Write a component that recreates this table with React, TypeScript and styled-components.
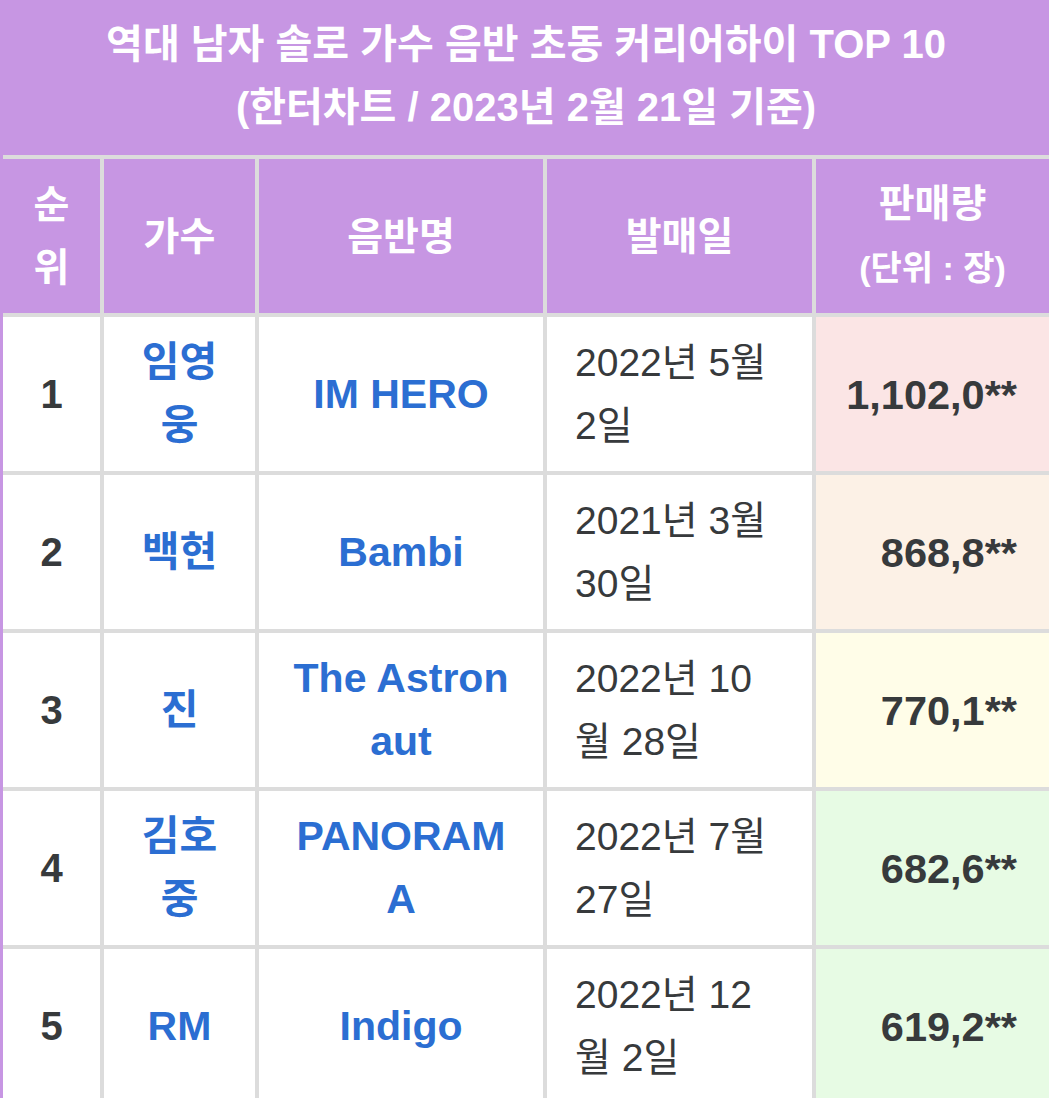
import React from "react";
import styled, { createGlobalStyle } from "styled-components";

interface Entry {
  rank: number;
  artist: string;
  album: string;
  date: string;
  sales: string;
  tint: string;
}

const PURPLE = "#c796e3";
const LINE = "#dcdcdc";
const COLS = "97px 151px 284px 265px 1fr";

const entries: Entry[] = [
  { rank: 1, artist: "임영웅", album: "IM HERO", date: "2022년 5월 2일", sales: "1,102,0**", tint: "#fbe5e5" },
  { rank: 2, artist: "백현", album: "Bambi", date: "2021년 3월 30일", sales: "868,8**", tint: "#fcf1e6" },
  { rank: 3, artist: "진", album: "The Astronaut", date: "2022년 10월 28일", sales: "770,1**", tint: "#fffde8" },
  { rank: 4, artist: "김호중", album: "PANORAMA", date: "2022년 7월 27일", sales: "682,6**", tint: "#e7fbe4" },
  { rank: 5, artist: "RM", album: "Indigo", date: "2022년 12월 2일", sales: "619,2**", tint: "#e7fbe4" },
];

const GlobalStyle = createGlobalStyle`
  html, body {
    margin: 0;
    padding: 0;
    background: #fff;
    overflow: hidden;
  }
  body {
    font-family: "Liberation Sans", "Noto Sans CJK KR", sans-serif;
  }
`;

const Table = styled.div`
  width: 1049px;
  box-sizing: border-box;
  border-left: 3px solid ${PURPLE};
  border-top: 3px solid ${PURPLE};
  background: ${LINE};
  display: flex;
  flex-direction: column;
  gap: 4px;
`;

const Title = styled.div`
  box-sizing: border-box;
  height: 152px;
  background: ${PURPLE};
  color: #fff;
  font-weight: bold;
  font-size: 40px;
  line-height: 63px;
  text-align: center;
  padding: 10px 16px 0;
`;

const Row = styled.div`
  display: grid;
  grid-template-columns: ${COLS};
  gap: 4px;
  height: 154px;
`;

const Cell = styled.div<{ $align?: "left" | "center" | "right"; $bg?: string }>`
  box-sizing: border-box;
  display: flex;
  align-items: center;
  justify-content: ${({ $align }) =>
    $align === "left" ? "flex-start" : $align === "right" ? "flex-end" : "center"};
  text-align: ${({ $align }) => $align || "center"};
  padding: 0 28px;
  background: ${({ $bg }) => $bg || "#fff"};
  line-height: 63px;
  word-break: break-all;
  min-width: 0;
`;

const HeadCell = styled(Cell)`
  background: ${PURPLE};
  color: #fff;
  font-weight: bold;
  font-size: 39px;
`;

const Unit = styled.span`
  font-size: 34px;
`;

const RankCell = styled(Cell)`
  color: #373a3c;
  font-weight: bold;
  font-size: 40px;
`;

const LinkCell = styled(Cell)`
  color: #2b6ed2;
  font-weight: bold;
  font-size: 41px;
`;

const DateCell = styled(Cell)`
  color: #373a3c;
  font-size: 39px;
`;

const SalesCell = styled(Cell)`
  color: #373a3c;
  font-weight: bold;
  font-size: 41.5px;
  padding-right: 32px;
`;

const App: React.FC = () => (
  <>
    <GlobalStyle />
    <Table>
      <Title>
        역대 남자 솔로 가수 음반 초동 커리어하이 TOP 10
        <br />
        (한터차트 / 2023년 2월 21일 기준)
      </Title>
      <Row>
        <HeadCell>순위</HeadCell>
        <HeadCell>가수</HeadCell>
        <HeadCell>음반명</HeadCell>
        <HeadCell>발매일</HeadCell>
        <HeadCell>
          <div>
            판매량
            <br />
            <Unit>(단위 : 장)</Unit>
          </div>
        </HeadCell>
      </Row>
      {entries.map((e) => (
        <Row key={e.rank}>
          <RankCell>{e.rank}</RankCell>
          <LinkCell>{e.artist}</LinkCell>
          <LinkCell>{e.album}</LinkCell>
          <DateCell $align="left">{e.date}</DateCell>
          <SalesCell $align="right" $bg={e.tint}>
            {e.sales}
          </SalesCell>
        </Row>
      ))}
    </Table>
  </>
);

export default App;
